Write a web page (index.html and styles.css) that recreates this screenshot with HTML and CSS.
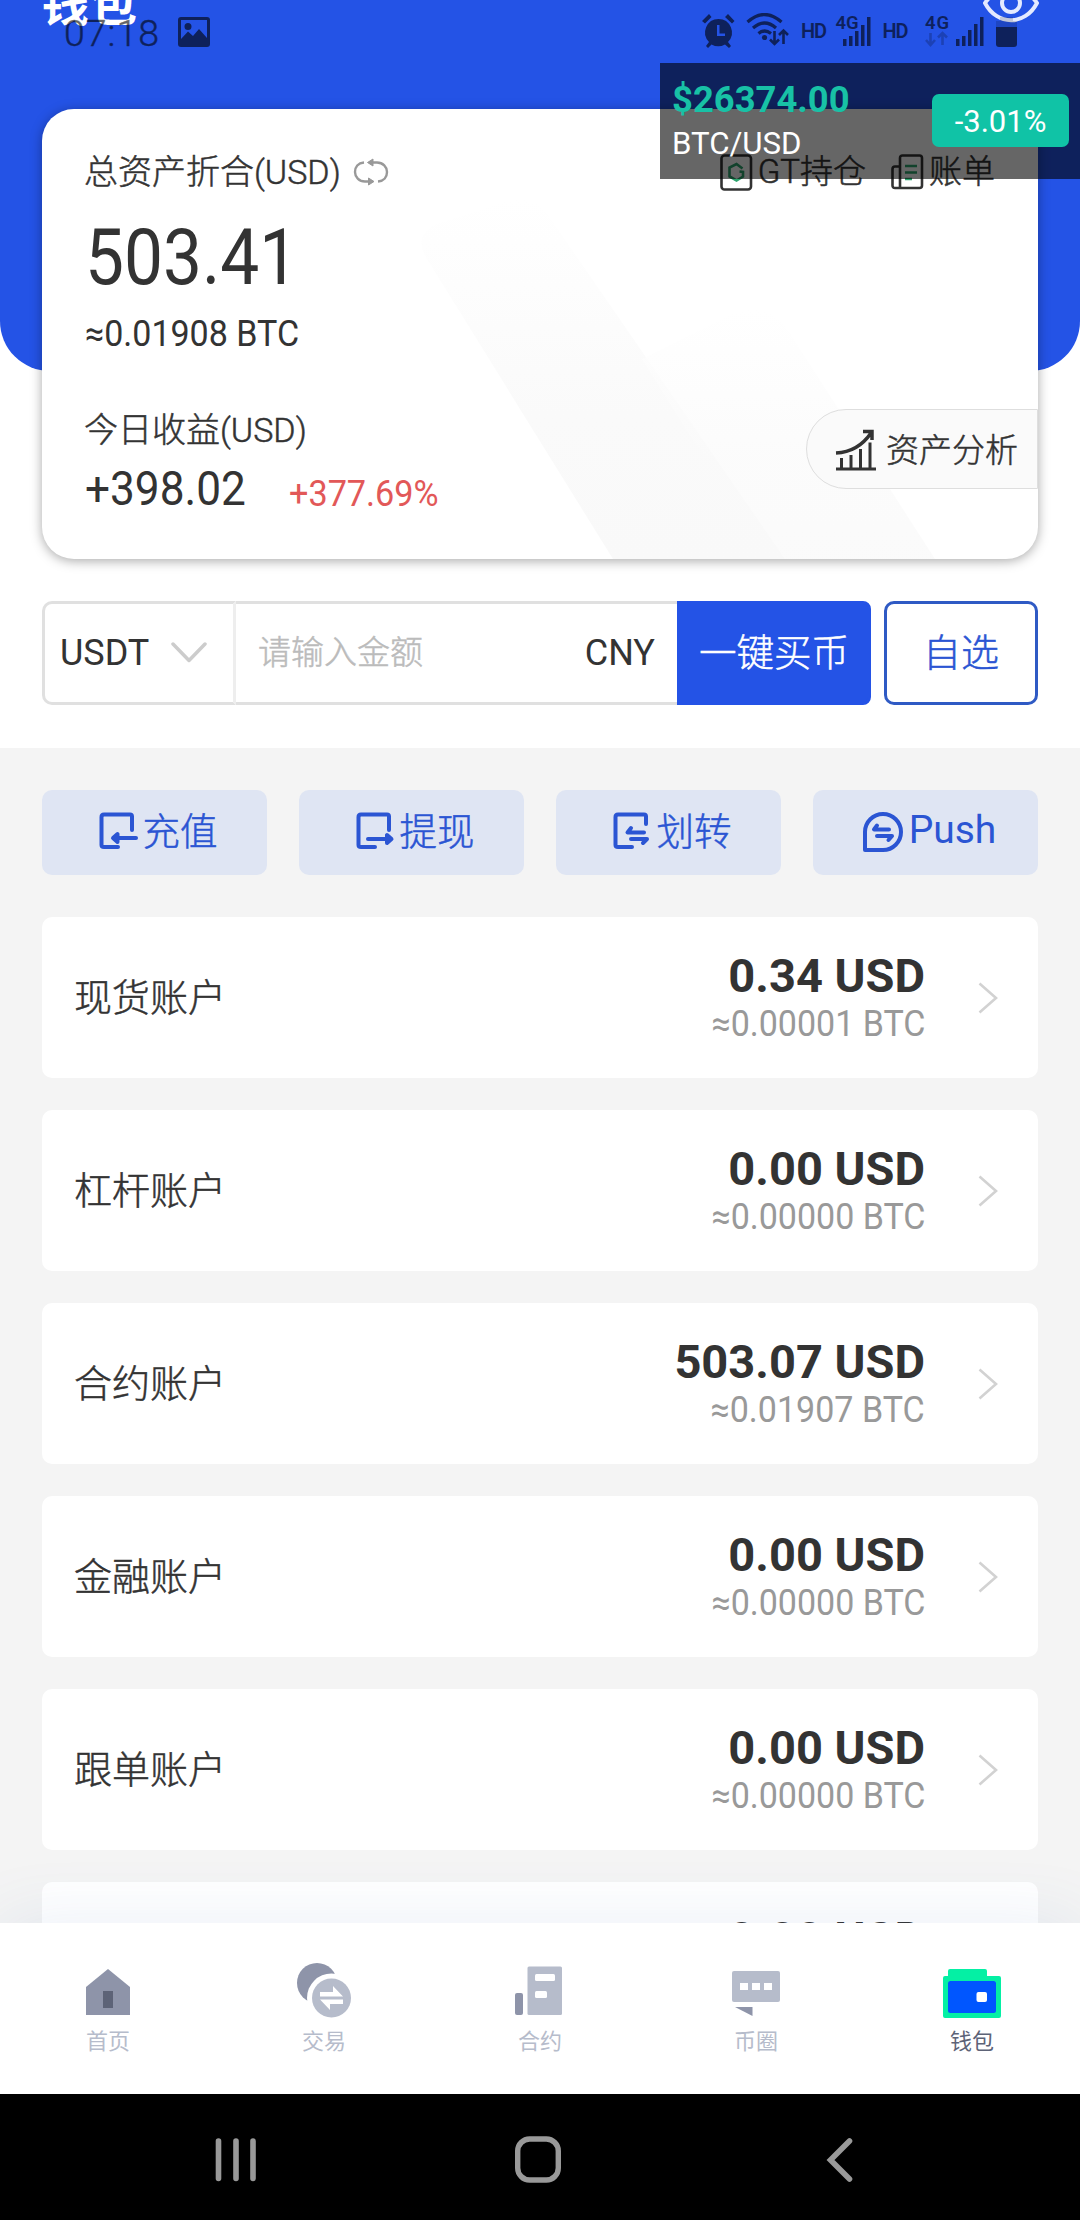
FILE: index.html
```html
<!DOCTYPE html>
<html lang="zh-CN">
<head>
<meta charset="utf-8">
<title>钱包</title>
<link rel="stylesheet" href="styles.css">
</head>
<body>
<div class="screen">
  <main class="page">
    <section class="hero">
      <header class="titlebar">
        <h1 class="title">钱包</h1>
        <svg class="eye" width="56" height="44" viewBox="0 0 56 44" fill="none" stroke="#e4eaff" stroke-width="4"><path d="M2 22C14 4 42 4 54 22C42 45 14 45 2 22Z"/><circle cx="28" cy="22" r="9"/></svg>
      </header>
      <div class="card">
        <svg class="stripes" width="996" height="450" viewBox="0 0 996 450">
          <defs>
            <linearGradient id="fade" x1="0" y1="0" x2="0" y2="1"><stop offset="0" stop-color="#ffffff"/><stop offset=".6" stop-color="#fafafa"/><stop offset="1" stop-color="#f9f9f9"/></linearGradient>
          </defs>
          <path d="M385 150Q370 126 395 115L465 92Q492 84 508 109L743 450H571Z" fill="url(#fade)"/>
          <path d="M650 330L600 250L690 205Q722 190 745 220L893 450H743Z" fill="url(#fade)" opacity=".7"/>
        </svg>
        <div class="card-head">
          <div class="label">总资产折合(USD)
            <svg width="36" height="28" viewBox="0 0 36 28" fill="none" stroke="#999" stroke-width="2.4"><path d="M11 4.500C5 5 2 9 2 14S6 23.500 12 23.500H19M25 23.500C31 23 34 19 34 14S30 4.500 24 4.500H16"/><path d="M20 1L14.500 4.500L20 8ZM15.500 20L21 23.500L15.500 27Z" fill="#999" stroke-width="1"/></svg>
          </div>
          <div class="links">
            <span class="link">
              <svg width="33" height="37" viewBox="0 0 33 37" fill="none" stroke="#333" stroke-width="2.600"><rect x="1.500" y="1.500" width="29.500" height="34" rx="3"/><path d="M22.500 14.500L16.500 10L9.500 13.500V22.500L16.500 26.500L23 22.500V18L19.500 17.500" stroke="#2ea56f"/></svg>
              GT持仓</span>
            <span class="link">
              <svg width="33" height="36" viewBox="0 0 33 36" fill="none" stroke="#333" stroke-width="2.600"><path d="M9 34V4Q9 1.500 11.500 1.500H28.500Q31 1.500 31 4V31.500Q31 34 28.500 34H4Q1.500 34 1.500 31.500V15Q1.500 12.500 4 12.500H9"/><path d="M14 12H26M14 18.500H26M14 25H21" stroke="#2ea56f"/></svg>
              账单</span>
          </div>
        </div>
        <div class="total"><span>503.41</span></div>
        <div class="btc"><span>≈0.01908 BTC</span></div>
        <div class="card-foot">
          <div>
            <div class="label">今日收益(USD)</div>
            <div class="profit"><span class="gain">+398.02</span><span class="pct">+377.69%</span></div>
          </div>
          <div class="analysis">
            <svg width="42" height="42" viewBox="0 0 42 42" fill="none" stroke="#333" stroke-width="3"><path d="M1 40H41M6.500 39V29M16 39V26M25.500 39V20M35 39V13.500"/><path d="M1 24Q23 23 36 4M28 2.500H37V11" stroke-width="3.500"/></svg>
            资产分析
          </div>
        </div>
      </div>
    </section>

    <section class="buy">
      <div class="select">USDT
        <svg width="36" height="22" viewBox="0 0 36 22" fill="none" stroke="#ccc" stroke-width="3.500" stroke-linecap="round" stroke-linejoin="round"><path d="M2 2L18 18.500L34 2"/></svg>
      </div>
      <div class="amount"><span class="placeholder">请输入金额</span><span>CNY</span></div>
      <div class="buy-btn">一键买币</div>
      <div class="pick-btn">自选</div>
    </section>

    <section class="accounts">
      <div class="actions">
        <div class="action"><svg width="40" height="38" viewBox="0 0 40 38" fill="none" stroke="#2b55d3" stroke-width="4" stroke-linecap="round" stroke-linejoin="round"><path d="M33 18V4.500Q33 2.500 31 2.500H5Q2.500 2.500 2.500 5V33Q2.500 35 5 35H19"/><path d="M37 26H17"/><path d="M14 26L18.500 22V30Z" fill="#2b55d3"/></svg>充值</div>
        <div class="action"><svg width="40" height="38" viewBox="0 0 40 38" fill="none" stroke="#2b55d3" stroke-width="4" stroke-linecap="round" stroke-linejoin="round"><path d="M33 18V4.500Q33 2.500 31 2.500H5Q2.500 2.500 2.500 5V33Q2.500 35 5 35H19"/><path d="M12 27H32"/><path d="M35.500 27L31 23V31Z" fill="#2b55d3"/></svg>提现</div>
        <div class="action"><svg width="40" height="38" viewBox="0 0 40 38" fill="none" stroke="#2b55d3" stroke-width="4" stroke-linecap="round" stroke-linejoin="round"><path d="M33 12V4.500Q33 2.500 31 2.500H5Q2.500 2.500 2.500 5V33Q2.500 35 5 35H19"/><path d="M18 16L14.500 20.500H31M18 27H34L30 31"/></svg>划转</div>
        <div class="action push"><svg width="42" height="42" viewBox="0 0 42 42" fill="none" stroke="#2b55d3" stroke-width="4" stroke-linecap="round" stroke-linejoin="round"><path d="M3 39V21A18 18 0 1 1 21 39Z"/><path d="M15 14.500L12 18.500H27M15 25H30L26.500 29"/></svg>Push</div>
      </div>

      <div class="row"><span class="name">现货账户</span><div class="sums"><div class="usd">0.34 USD</div><div class="sub">≈0.00001 BTC</div></div><svg class="go" width="20" height="32" viewBox="0 0 20 32"><path d="M1.500 1.500L18 16L1.500 30.500"/></svg></div>
      <div class="row"><span class="name">杠杆账户</span><div class="sums"><div class="usd">0.00 USD</div><div class="sub">≈0.00000 BTC</div></div><svg class="go" width="20" height="32" viewBox="0 0 20 32"><path d="M1.500 1.500L18 16L1.500 30.500"/></svg></div>
      <div class="row"><span class="name">合约账户</span><div class="sums"><div class="usd">503.07 USD</div><div class="sub">≈0.01907 BTC</div></div><svg class="go" width="20" height="32" viewBox="0 0 20 32"><path d="M1.500 1.500L18 16L1.500 30.500"/></svg></div>
      <div class="row"><span class="name">金融账户</span><div class="sums"><div class="usd">0.00 USD</div><div class="sub">≈0.00000 BTC</div></div><svg class="go" width="20" height="32" viewBox="0 0 20 32"><path d="M1.500 1.500L18 16L1.500 30.500"/></svg></div>
      <div class="row"><span class="name">跟单账户</span><div class="sums"><div class="usd">0.00 USD</div><div class="sub">≈0.00000 BTC</div></div><svg class="go" width="20" height="32" viewBox="0 0 20 32"><path d="M1.500 1.500L18 16L1.500 30.500"/></svg></div>
      <div class="row"><div class="sums"><div class="usd">0.00 USD</div></div></div>
    </section>
  </main>

  <nav class="tabs">
    <div class="tab"><svg width="60" height="60" viewBox="0 0 60 60"><path d="M8 26L30 8L52 26V54H8Z" fill="#8e94a9"/><path d="M25 30H35V47H25Z" fill="#5d6377"/></svg>首页</div>
    <div class="tab"><svg width="60" height="60" viewBox="0 0 60 60"><circle cx="23" cy="22" r="20" fill="#8e94a9"/><circle cx="37.500" cy="37" r="24.500" fill="#fff"/><circle cx="37.500" cy="37" r="19.500" fill="#b6bccb"/><path d="M26 31H39V25L49 35.500H26ZM49 43H36V49L26 38.500H49Z" fill="#fff"/></svg>交易</div>
    <div class="tab"><svg width="60" height="60" viewBox="0 0 60 60"><rect x="5" y="32" width="8" height="22" rx="2" fill="#8e94a9"/><rect x="17.500" y="5.500" width="34.500" height="48.500" rx="1.500" fill="#b6bccb"/><rect x="25" y="13" width="20" height="7" rx="1.500" fill="#fff"/><rect x="25" y="30" width="12" height="7" rx="1.500" fill="#fff"/></svg>合约</div>
    <div class="tab"><svg width="60" height="60" viewBox="0 0 60 60"><rect x="6" y="10" width="48" height="31" rx="2" fill="#b6bccb"/><path d="M14 22h8v7h-8zM26 22h8v7h-8zM38 22h8v7h-8z" fill="#fff"/><path d="M9 46H26.500V55Z" fill="#8e94a9"/></svg>币圈</div>
    <div class="tab active"><svg width="60" height="60" viewBox="0 0 60 60"><path d="M3 15H6V10Q6 8 8 8H43Q45 8 45 10V15H57Q59 15 59 17V55Q59 57 57 57H3Q1 57 1 55V17Q1 15 3 15Z" fill="#04f0a4"/><rect x="6" y="20" width="48" height="32" rx="2.500" fill="#0056ff"/><rect x="34.500" y="31" width="10.500" height="10" rx="2" fill="#fff"/></svg>钱包</div>
  </nav>

  <div class="sysnav">
    <svg width="48" height="50" viewBox="0 0 48 50" stroke="#999" stroke-width="5.600" stroke-linecap="round"><path d="M6.500 6V43.500M24 6V43.500M41 6V43.500"/></svg>
    <svg width="48" height="50" viewBox="0 0 48 50" fill="none" stroke="#999" stroke-width="5.400"><rect x="3.700" y="4" width="40.600" height="41" rx="12"/></svg>
    <svg width="48" height="50" viewBox="0 0 48 50" fill="none" stroke="#999" stroke-width="5.600" stroke-linecap="round"><path d="M33.500 6L14.500 25L33.500 44"/></svg>
  </div>

  <div class="ticker">
    <div><div class="price">$26374.00</div><div class="pair">BTC/USD</div></div>
    <div class="change">-3.01%</div>
  </div>

  <div class="status">
    <span class="time">07:18</span>
    <svg class="photo" width="32" height="30" viewBox="0 0 32 30"><path fill-rule="evenodd" d="M3 0H29Q32 0 32 3V27Q32 30 29 30H3Q0 30 0 27V3Q0 0 3 0ZM3 3V22L10 14.500L15 19L21 12L29 21V3ZM10 6A3.500 3.500 0 1 1 10 13A3.500 3.500 0 1 1 10 6Z"/></svg>
    <svg class="signals" width="320" height="36" viewBox="0 0 320 36">
      <path fill-rule="evenodd" d="M17.500 6A13.500 13.500 0 0 1 27 29L30 33L28 35L24 31.500A14 14 0 0 1 10.500 31.500L7 35L5 33L8 29A13.500 13.500 0 0 1 17.500 6ZM16 12V23H24V20.500H18.500V12Z"/>
      <path d="M1 8L8 1L10.500 4L4 10.500ZM24 4L27 1L33.500 8L31 10.500Z"/>
      <g fill="none" stroke="#000" stroke-width="3.200"><path d="M46.500 9Q63.500 -6 80.500 9M52 15Q63.500 5 75 15M57.500 20.500Q63.500 15.500 70 20.500"/><path d="M73.500 18V30M69 26.500L73.500 31L78 26.500M82.500 31V18M78 22L82.500 17.500L87 22" stroke-width="2.600"/></g>
      <circle cx="63.500" cy="24.500" r="2.600"/>
      <text x="100" y="24.500" font-size="20" font-weight="600" textLength="26">HD</text>
      <text x="134.500" y="16" font-size="18.500" font-weight="600" textLength="23">4G</text>
      <path d="M142 26h3.500v7H142zM148 23h3.500v10H148zM154 18h3.500v15H154zM160 12h3.500v21H160zM166 4h3.500v29H166z"/>
      <text x="181.500" y="24.500" font-size="20" font-weight="600" textLength="26">HD</text>
      <text x="224" y="16" font-size="18.500" font-weight="600" textLength="24">4G</text>
      <g fill="none" stroke="#000" stroke-width="2.600" opacity=".35"><path d="M229.500 20V31M225 27L229.500 32L234 27M241.500 32V20M237 24.500L241.500 20L246 24.500"/></g>
      <path d="M255 26h3.500v7H255zM261 23h3.500v10H261zM267 17h3.500v16H267zM273 11h3.500v22H273zM279 4h3.500v29H279z"/>
      <path d="M295 14H316V31Q316 34 313 34H298Q295 34 295 31Z"/><path d="M295 8H299V4H312V8H316V14H295Z" opacity=".25"/>
    </svg>
  </div>
</div>
</body>
</html>
```
FILE: styles.css
```css
* { box-sizing: border-box; }
body {
  margin: 0;
  font-family: Roboto, "Noto Sans CJK SC", sans-serif;
  color: #333;
}
svg { display: block; flex: none; }

.screen {
  position: relative;
  width: 1080px;
  height: 2220px;
  overflow: hidden;
  display: flex;
  flex-direction: column;
  background: #fff;
}
.page { height: 1923px; overflow: hidden; flex: none; }

.hero {
  position: relative;
  height: 559px;
  padding: 0 42px;
}
.hero::before {
  content: "";
  position: absolute;
  inset: 0 0 188px;
  background: #2453e6;
  border-radius: 0 0 50px 50px;
}
.titlebar {
  position: relative;
  height: 109px;
  display: flex;
  justify-content: space-between;
}
.title {
  margin: -32px 0 0 -1px;
  font: 700 48px/64px "Noto Sans CJK SC", sans-serif;
  color: #fff;
}
.eye { margin: -19px -1px 0 0; }

.card {
  position: relative;
  height: 450px;
  padding: 39px 0 0 43px;
  border-radius: 32px;
  background: #fff;
  box-shadow: 0 2px 12px rgba(0, 0, 0, .34);
}
.stripes { position: absolute; left: 0; top: 0; border-radius: 32px; }
.card > div { position: relative; }
.card-head { display: flex; justify-content: space-between; padding-right: 43px; }
.label, .link, .analysis, .placeholder, .buy-btn, .pick-btn, .action, .name {
  font-weight: 300;
  -webkit-text-stroke: .5px;
}
.label {
  display: flex;
  align-items: center;
  gap: 12px;
  margin-left: -1px;
  font-size: 34px;
  line-height: 48px;
}
.links { display: flex; gap: 25px; }
.link {
  display: flex;
  align-items: center;
  gap: 5px;
  font-size: 33px;
  line-height: 48px;
}
.total { margin-top: 17px; font-size: 78px; line-height: 90px; }
.btc { margin-top: 9px; font-size: 36px; line-height: 44px; }
.total span { display: inline-block; transform: scaleX(.89); transform-origin: left; }
.btc span { display: inline-block; transform: scaleX(.945); transform-origin: left; }
.card-foot { margin-top: 50px; display: flex; justify-content: space-between; }
.profit { margin-top: 7px; display: flex; align-items: baseline; line-height: 56px; }
.gain { width: 204px; font-size: 48px; transform: scaleX(.92); transform-origin: left; white-space: nowrap; }
.pct { position: relative; top: 1px; font-size: 36px; color: #e25858; transform: scaleX(.95); transform-origin: left; }
.analysis {
  width: 232px;
  height: 80px;
  margin-top: 3px;
  padding: 0 0 3px 28px;
  display: flex;
  align-items: center;
  gap: 9px;
  border: 1px solid #dedede;
  border-radius: 40px 0 0 40px;
  background: #fafafa;
  font-size: 33px;
  white-space: nowrap;
}
.analysis svg { margin-top: 4px; }

.buy { display: flex; height: 189px; padding: 42px 42px 43px; line-height: 98px; }
.select {
  width: 194px;
  display: flex;
  align-items: center;
  gap: 22px;
  padding-left: 15px;
  border: 3px solid #e0e0e0;
  border-right-color: #eee;
  border-radius: 10px 0 0 10px;
  font-size: 36px;
}
.amount {
  width: 441px;
  display: flex;
  justify-content: space-between;
  padding: 0 22px 0 22px;
  border: solid #e0e0e0;
  border-width: 3px 0;
  font-size: 36px;
}
.placeholder { font-size: 33px; color: #bbb; }
.buy-btn, .pick-btn {
  text-align: center;
  font-size: 38px;
  border: 3px solid #2453e6;
}
.buy-btn { width: 194px; border-radius: 0 8px 8px 0; background: #2453e6; color: #fff; font-size: 37.500px; }
.pick-btn { width: 154px; margin-left: 13px; border-radius: 10px; border-color: #2f5ac4; color: #2b55d3; }

.accounts { height: 1300px; padding: 42px; background: #f4f4f4; }
.actions { display: flex; gap: 32px; margin-bottom: 42px; }
.action {
  flex: 1;
  height: 85px;
  padding: 0 0 9px 7px;
  display: flex;
  align-items: center;
  justify-content: center;
  gap: 4px;
  border-radius: 10px;
  background: #dfe5f3;
  color: #2b55d3;
  font-size: 37.500px;
}
.action svg { margin-top: 6px; }
.push { font-size: 39px; font-weight: 400; gap: 5px; padding-bottom: 6px; -webkit-text-stroke: 0; }
.push svg { margin-top: 4px; }

.row {
  height: 161px;
  margin-bottom: 32px;
  padding: 0 40px 0 32px;
  display: flex;
  align-items: center;
  border-radius: 10px;
  background: #fff;
}
.name { margin-bottom: 6px; font-size: 38px; }
.sums { margin: 3px 0 0 auto; text-align: right; }
.usd { font-size: 47px; font-weight: 700; line-height: 50px; }
.sub { font-size: 36px; line-height: 46px; color: #999; transform: scaleX(.945); transform-origin: right; }
.go { margin-left: 53px; fill: none; stroke: #d2d2d2; stroke-width: 2.600; }
.row:last-child { align-items: flex-start; padding: 29px 113px 0 0; }

.tabs {
  position: relative;
  height: 171px;
  flex: none;
  display: flex;
  padding-top: 38px;
  background: #fff;
  box-shadow: 0 0 70px rgba(60, 110, 180, .11);
}
.tab {
  flex: 1;
  display: flex;
  flex-direction: column;
  align-items: center;
  gap: 5px;
  font-size: 22px;
  line-height: 32px;
  color: #b6bccb;
}
.active { color: #5d6377; }

.sysnav {
  position: relative;
  height: 126px;
  display: flex;
  justify-content: center;
  gap: 254px;
  padding: 41px 4px 0 0;
  background: #000;
}

.ticker {
  position: absolute;
  left: 660px;
  top: 63px;
  width: 420px;
  height: 116px;
  padding: 15px 11px 0 12px;
  display: flex;
  justify-content: space-between;
  background: rgba(0, 0, 0, .6);
}
.price { padding-top: 1px; font-size: 36.400px; font-weight: 700; line-height: 42px; color: #18c1a6; }
.pair { font-size: 31.200px; line-height: 46px; color: #fff; }
.change {
  width: 137px;
  height: 53px;
  margin-top: 16px;
  border-radius: 7px;
  background: #10c3a6;
  color: #fff;
  font-size: 31px;
  line-height: 56px;
  text-align: center;
}

.status {
  position: absolute;
  left: 0;
  top: 0;
  width: 1080px;
  height: 62px;
  padding: 0 59px 0 64px;
  display: flex;
  opacity: .6;
  color: #000;
}
.time { width: 114px; font-size: 37.500px; font-weight: 300; line-height: 67px; letter-spacing: 1px; -webkit-text-stroke: .4px; }
.photo { margin-top: 17px; }
.signals { margin: 13px 0 0 auto; }
```
